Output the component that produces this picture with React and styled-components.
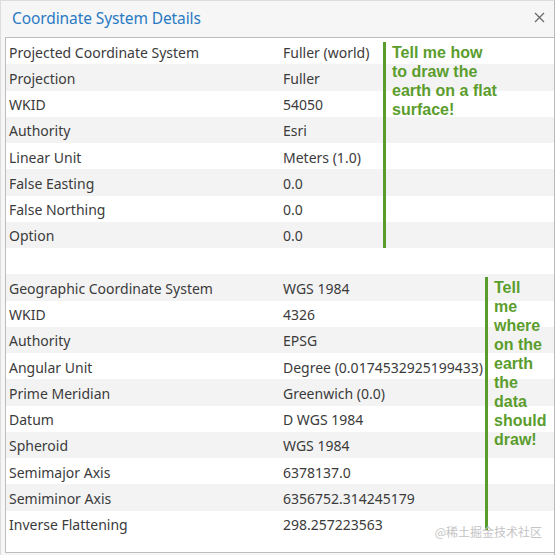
import styled, { createGlobalStyle } from "styled-components";

const projected = [
  ["Projected Coordinate System", "Fuller (world)"],
  ["Projection", "Fuller"],
  ["WKID", "54050"],
  ["Authority", "Esri"],
  ["Linear Unit", "Meters (1.0)"],
  ["False Easting", "0.0"],
  ["False Northing", "0.0"],
  ["Option", "0.0"],
];

const geographic = [
  ["Geographic Coordinate System", "WGS 1984"],
  ["WKID", "4326"],
  ["Authority", "EPSG"],
  ["Angular Unit", "Degree (0.0174532925199433)"],
  ["Prime Meridian", "Greenwich (0.0)"],
  ["Datum", "D WGS 1984"],
  ["Spheroid", "WGS 1984"],
  ["Semimajor Axis", "6378137.0"],
  ["Semiminor Axis", "6356752.314245179"],
  ["Inverse Flattening", "298.257223563"],
];

const Note = ({ left, top, height, lines }) => (
  <NoteBox style={{ left, top, height }}>
    <NoteLine />
    <NoteText>
      {lines.map((l) => (
        <div key={l}>{l}</div>
      ))}
    </NoteText>
  </NoteBox>
);

const App = () => {
  const rows = [...projected, ["", ""], ...geographic];
  return (
    <>
      <GlobalStyle />
      <Window>
        <TitleBar>
          <Title>Coordinate System Details</Title>
          <Close>
            <svg width="11" height="11" viewBox="0 0 11 11">
              <path d="M1 1L10 10M10 1L1 10" stroke="#6b6b6b" strokeWidth="1.3" />
            </svg>
          </Close>
        </TitleBar>
        <Panel>
          {rows.map(([k, v], i) => (
            <Row key={i} $striped={i % 2 === 1}>
              <Cell>{k}</Cell>
              <Cell>{v}</Cell>
            </Row>
          ))}
          <Note
            left={377}
            top={4}
            height={206}
            lines={["Tell me how", "to draw the", "earth on a flat", "surface!"]}
          />
          <Note
            left={479}
            top={239}
            height={253}
            lines={["Tell", "me", "where", "on the", "earth", "the", "data", "should", "draw!"]}
          />
          <Watermark>@稀土掘金技术社区</Watermark>
        </Panel>
      </Window>
    </>
  );
};

const GlobalStyle = createGlobalStyle`
  body {
    margin: 0;
    background: #ffffff;
  }
`;

const Window = styled.div`
  width: 555px;
  height: 555px;
  box-sizing: border-box;
  background: #f6f6f6;
  border-top: 1px solid #dcdcdc;
  border-left: 1px solid #dcdcdc;
  border-right: 1px solid #b9b9b9;
  display: flex;
  flex-direction: column;
  font-family: "Noto Sans", "Open Sans", sans-serif;
`;

const TitleBar = styled.div`
  height: 36px;
  display: flex;
  align-items: center;
  justify-content: space-between;
  padding: 0 9px 0 11px;
  flex-shrink: 0;
`;

const Title = styled.div`
  color: #2a7ac3;
  font-size: 15.5px;
  letter-spacing: -0.1px;
  padding-bottom: 2px;
`;

const Close = styled.div`
  display: flex;
  align-items: center;
  padding-bottom: 4px;
`;

const Panel = styled.div`
  position: relative;
  margin-left: 4px;
  height: 516px;
  box-sizing: border-box;
  background: #ffffff;
  border: 1px solid #bdbdbd;
  border-right: none;
`;

const Row = styled.div`
  display: grid;
  grid-template-columns: 274px 1fr;
  height: 26.25px;
  align-items: center;
  padding-left: 3px;
  background: ${(p) => (p.$striped ? "#f3f3f3" : "#ffffff")};
`;

const Cell = styled.div`
  font-size: 14px;
  color: #3b3b3b;
  white-space: nowrap;
  padding-top: 2px;
`;

const NoteBox = styled.div`
  position: absolute;
  display: flex;
  gap: 6px;
`;

const NoteLine = styled.div`
  width: 3px;
  background: #5a9c2c;
`;

const NoteText = styled.div`
  font-family: "Liberation Sans", Arial, sans-serif;
  font-weight: bold;
  font-size: 16px;
  line-height: 19px;
  color: #5b9d2d;
  padding-top: 1px;
  white-space: nowrap;
`;

const Watermark = styled.div`
  position: absolute;
  right: 12px;
  bottom: 12px;
  font-family: "Noto Sans CJK SC", sans-serif;
  font-size: 12px;
  color: #c4c4c4;
`;

export default App;
